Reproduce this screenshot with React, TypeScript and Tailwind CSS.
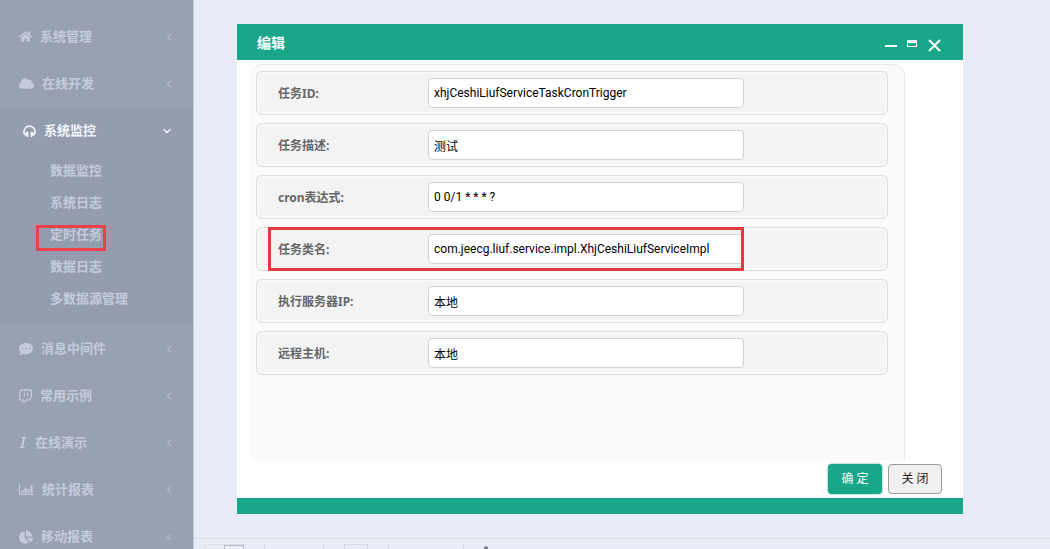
import React from "react";
import { ChevronDown, ChevronLeft } from "lucide-react";
import { FaChartPie, FaCloud, FaCommentDots, FaHome } from "react-icons/fa";

const HeadphonesIcon = () => (
  <svg width="13" height="13" viewBox="0 0 14 14" fill="none">
    <path
      d="M2.600 10.800C1.500 9.900 1 8.800 1 7.300a6 6 0 0 1 12 0c0 1.500-.5 2.600-1.600 3.500"
      stroke="currentColor"
      strokeWidth="1.800"
    />
    <path d="M3.600 7.200h2.200v5.600H4.400L2.600 11V8.500zM10.400 7.200H8.200v5.600h1.400l1.800-1.800V8.500z" fill="currentColor" />
  </svg>
);

const TwitchIcon = () => (
  <svg width="13" height="14" viewBox="0 0 13 14" fill="none" stroke="currentColor">
    <path d="M1.700 1h10.600v7.600l-2.300 2.200H7.400l-2 2H4v-2H.8V3.200z" strokeWidth="1.300" />
    <path d="M5.500 3.800v3.600M8.700 3.800v3.600" strokeWidth="1.300" />
  </svg>
);

const ItalicIcon = () => (
  <svg width="8" height="13" viewBox="0 0 8 13" fill="none" stroke="currentColor">
    <path d="M2.600 1.700h5M.4 11.300h5" strokeWidth="1.200" />
    <path d="M5.200 1.500L2.900 11.500" strokeWidth="1.900" />
  </svg>
);

const BarChartIcon = () => (
  <svg width="15" height="13" viewBox="0 0 15 13" fill="currentColor">
    <path d="M0 1h1v10h14v1H0zM2.500 7h2v3.500h-2zM5.500 4.500h2v6h-2zM8.500 5.800h2v4.700h-2zM11.500 2.500h2v8h-2z" />
  </svg>
);

const topMenu = [
  { label: "系统管理", icon: <FaHome size={13} /> },
  { label: "在线开发", icon: <FaCloud size={15} /> },
];

const subMenu = ["数据监控", "系统日志", "定时任务", "数据日志", "多数据源管理"];

const bottomMenu = [
  { label: "消息中间件", icon: <FaCommentDots size={14} /> },
  { label: "常用示例", icon: <TwitchIcon /> },
  { label: "在线演示", icon: <ItalicIcon /> },
  { label: "统计报表", icon: <BarChartIcon /> },
  { label: "移动报表", icon: <FaChartPie size={14} /> },
];

const fields = [
  { id: "taskId", label: "任务ID:", value: "xhjCeshiLiufServiceTaskCronTrigger" },
  { id: "taskDescribe", label: "任务描述:", value: "测试" },
  { id: "cron", label: "cron表达式:", value: "0 0/1 * * * ?" },
  { id: "className", label: "任务类名:", value: "com.jeecg.liuf.service.impl.XhjCeshiLiufServiceImpl", marked: true },
  { id: "runServerIp", label: "执行服务器IP:", value: "本地" },
  { id: "farHost", label: "远程主机:", value: "本地" },
];

const MenuItem = ({ label, icon }: { label: string; icon: React.ReactNode }) => (
  <li>
    <a href="#" className="flex h-[47px] items-center pr-[18px] pl-[19px]">
      {icon}
      <span className="ml-2 flex-1">{label}</span>
      <ChevronLeft size={12} strokeWidth={2} />
    </a>
  </li>
);

const App = () => {
  return (
    <div className="flex h-screen overflow-hidden bg-[#e8ecf6] font-['Noto_Sans','Noto_Sans_CJK_SC',sans-serif]">
      {/* Sidebar */}
      <nav className="w-[194px] shrink-0 border-r border-[#c5ccda] bg-[#98a1b1] pt-[13px] text-[13px] font-bold text-[#c4ccdc]">
        <ul>
          {topMenu.map((item) => (
            <MenuItem key={item.label} {...item} />
          ))}
          <li className="bg-[#949dad] pb-[10px]">
            <a href="#" className="flex h-12 items-center pr-5 pl-[23px] text-[#f1f5fd]">
              <HeadphonesIcon />
              <span className="ml-2 flex-1">系统监控</span>
              <ChevronDown size={12} strokeWidth={3} />
            </a>
            <ul>
              {subMenu.map((label) => (
                <li key={label} className="relative">
                  <a href="#" className="flex h-8 items-center pl-[50px]">
                    {label}
                  </a>
                  {label === "定时任务" && (
                    <span className="absolute top-[6px] left-9 h-[26px] w-[70px] border-3 border-[#e8414a]"></span>
                  )}
                </li>
              ))}
            </ul>
          </li>
          {bottomMenu.map((item) => (
            <MenuItem key={item.label} {...item} />
          ))}
        </ul>
      </nav>

      <main className="flex flex-1 flex-col">
        {/* Edit dialog */}
        <section className="mt-6 mr-[87px] ml-[43px] bg-white">
          <header className="flex h-9 items-center bg-[#1aa689] pr-[22px] pl-5 text-white">
            <h1 className="flex-1 pt-px text-sm font-bold">编辑</h1>
            <div className="flex items-center gap-[10px] pt-[6px]">
              <button type="button" aria-label="最小化">
                <svg width="12" height="12" viewBox="0 0 12 12">
                  <path d="M0 6h12v2H0z" fill="currentColor" />
                </svg>
              </button>
              <button type="button" aria-label="最大化">
                <svg width="10" height="12" viewBox="0 0 10 12">
                  <path d="M0 1h10v7H0zM1 4v3h8V4z" fill="currentColor" fillRule="evenodd" />
                </svg>
              </button>
              <button type="button" aria-label="关闭窗口">
                <svg width="14" height="14" viewBox="0 0 14 14">
                  <path d="M2 2l11 11M13 2L2 13" stroke="currentColor" strokeWidth="2" />
                </svg>
              </button>
            </div>
          </header>

          <form>
            <div className="pt-1 pr-[58px] pl-[14px]">
              <div className="flex h-[396px] flex-col gap-2 rounded-t-xl border-t border-r border-[#e9e9e9] bg-[#fafafa] pt-[6px] pr-4 pl-[5px]">
                {fields.map((field) => (
                  <div
                    key={field.id}
                    className="relative flex h-11 items-center rounded-md border border-[#dedede] bg-[#f3f3f3] pl-[21px] shadow-[inset_0_0_0_2px_#f8f8f8]"
                  >
                    <label htmlFor={field.id} className="w-[150px] pt-px text-xs font-bold text-[#666]">
                      {field.label}
                    </label>
                    <input
                      id={field.id}
                      defaultValue={field.value}
                      className="h-[30px] w-[316px] rounded border border-[#d2d2d2] bg-white px-[5px] font-[Roboto,'Noto_Sans_CJK_SC',sans-serif] text-xs text-black"
                    />
                    {field.marked && (
                      <span className="pointer-events-none absolute -top-px left-[11px] h-11 w-[476px] border-3 border-[#e0393e]"></span>
                    )}
                  </div>
                ))}
              </div>
            </div>
            <div className="flex h-[38px] items-center justify-end gap-[6px] pr-[21px]">
              <button type="button" className="h-[30px] w-[54px] rounded-sm bg-[#1aa689] text-xs text-white shadow-[0_0_2px_#1aa689]">
                确 定
              </button>
              <button type="button" className="h-[30px] w-[54px] rounded-sm border border-[#999] bg-[#f0f0f0] text-xs text-[#222]">
                关 闭
              </button>
            </div>
          </form>
          <footer className="h-4 bg-[#1aa689]"></footer>
        </section>

        {/* Pager of the grid behind the dialog */}
        <div className="mt-auto flex h-[11px] items-end gap-5 overflow-hidden border-t border-[#d9dde6] pl-[10px]">
          <div className="flex h-[5px] w-10 justify-end border-t border-l border-[#dde1ea]">
            <div className="h-1 w-5 border border-b-0 border-[#b4b9c4]"></div>
          </div>
          <div className="h-[5px] w-[60px] border-x border-[#d5d9e3]"></div>
          <div className="h-[5px] w-6 border border-b-0 border-[#d5d9e3]"></div>
          <div className="h-[5px] w-[76px] border-x border-[#d5d9e3]"></div>
          <div className="h-[3px] w-1 rounded-t-full bg-[#7d838f]"></div>
        </div>
      </main>
    </div>
  );
};

export default App;
